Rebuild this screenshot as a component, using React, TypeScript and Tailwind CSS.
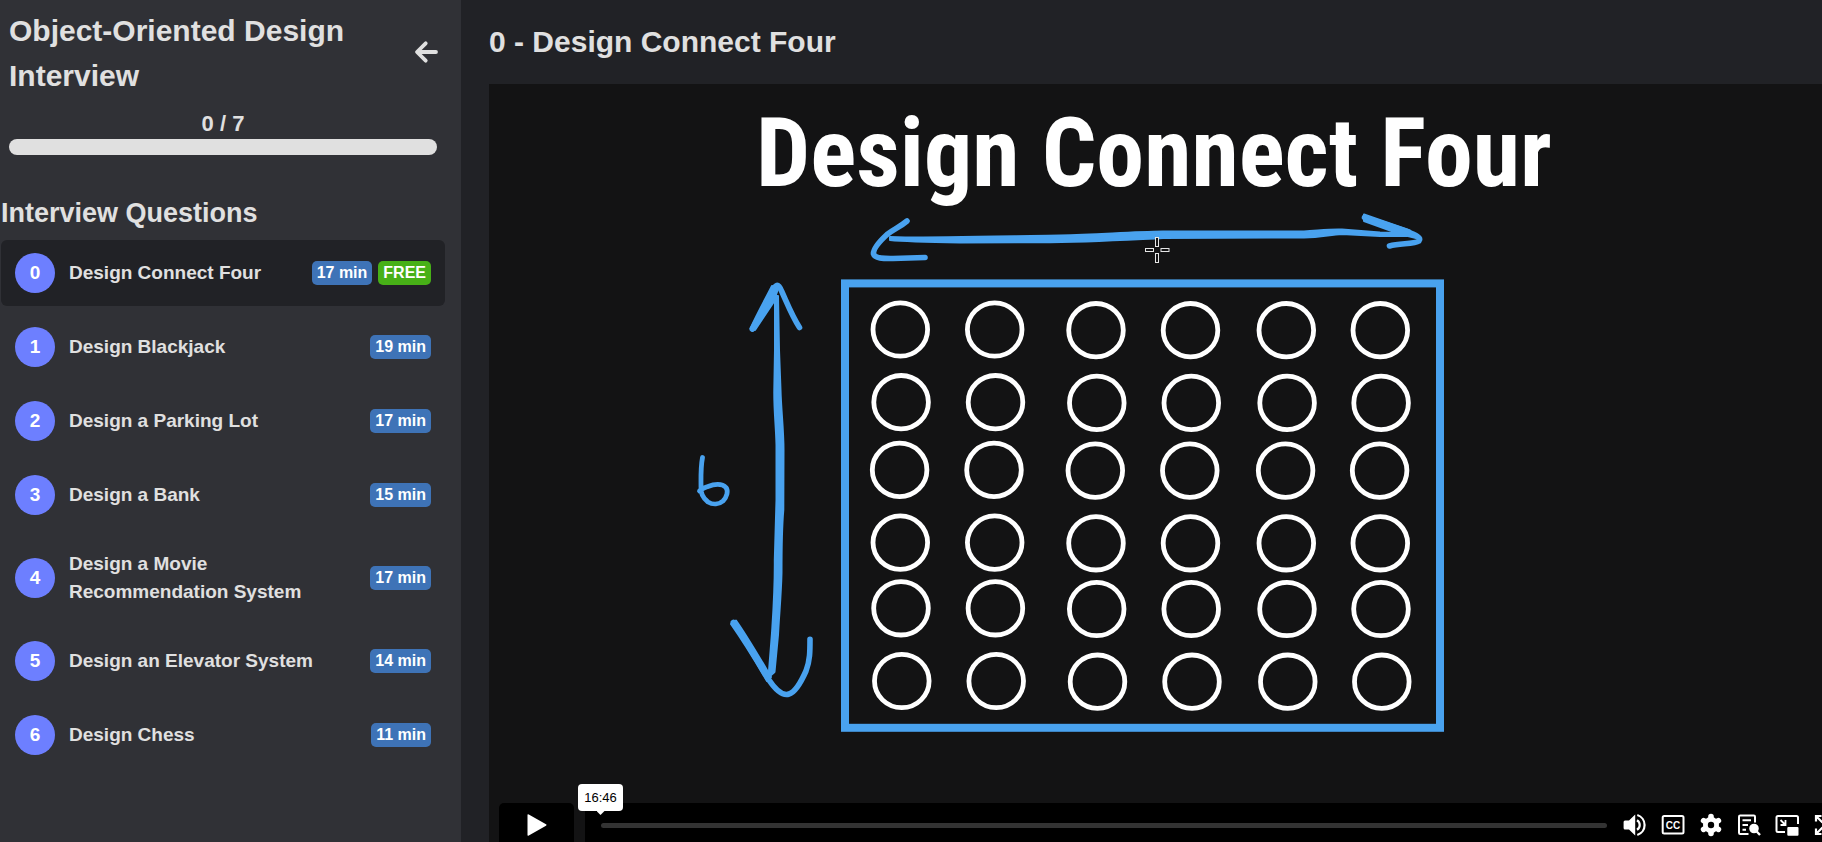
import type { ReactNode } from "react";

type Question = { title: string; minutes: number; free?: boolean };

const questions: Question[] = [
  { title: "Design Connect Four", minutes: 17, free: true },
  { title: "Design Blackjack", minutes: 19 },
  { title: "Design a Parking Lot", minutes: 17 },
  { title: "Design a Bank", minutes: 15 },
  { title: "Design a Movie Recommendation System", minutes: 17 },
  { title: "Design an Elevator System", minutes: 14 },
  { title: "Design Chess", minutes: 11 },
];

function Badge({ free, children }: { free?: boolean; children: ReactNode }) {
  return (
    <span
      className={`shrink-0 rounded-[5px] px-[5px] text-base leading-6 text-white ${
        free ? "bg-[#47b017]" : "bg-[#3e73b7]"
      }`}
    >
      {children}
    </span>
  );
}

function QuestionRow({ index, question, active }: { index: number; question: Question; active: boolean }) {
  return (
    <li>
      <a
        href={`#question-${index}`}
        aria-current={active ? "page" : undefined}
        className={`flex min-h-[66px] items-center rounded-md px-[14px] py-[13px] ${active ? "bg-[#212226]" : ""}`}
      >
        <span className="flex size-10 shrink-0 items-center justify-center rounded-full bg-[#6d7fff] text-[19px] leading-7 text-white">
          {index}
        </span>
        <span className="mr-4 ml-[14px] flex-1 py-px text-[19px] leading-7">{question.title}</span>
        <span className="flex shrink-0 gap-[6px]">
          <Badge>{question.minutes} min</Badge>
          {question.free && <Badge free>FREE</Badge>}
        </span>
      </a>
    </li>
  );
}

function Sidebar() {
  return (
    <aside className="w-[461px] shrink-0 bg-[#303136]">
      <header className="flex items-center justify-between px-[9px] pt-2">
        <h1 className="w-[350px] text-[30px] leading-[45px]">Object-Oriented Design Interview</h1>
        <button type="button" aria-label="Back" className="mr-[14px] mb-0.5 flex">
          <svg viewBox="0 0 24 24" className="size-6" fill="none" stroke="currentColor" strokeWidth="3.8" strokeLinecap="round" strokeLinejoin="round">
            <path d="M22 12H3.500M11.700 3.300L3 12l8.700 8.700" />
          </svg>
        </button>
      </header>
      <div className="mr-6 ml-[9px] pt-[10px]">
        <p id="progress-label" className="text-center text-[22px] leading-[31px]">
          0 / 7
        </p>
        <div
          role="progressbar"
          aria-labelledby="progress-label"
          aria-valuemin={0}
          aria-valuemax={7}
          aria-valuenow={0}
          className="h-4 rounded-full bg-[#e0e0e0]"
        />
      </div>
      <nav className="mt-[38px] mr-4 ml-px">
        <h2 className="mb-[7px] text-[27px] leading-10">Interview Questions</h2>
        <ul className="flex flex-col gap-2">
          {questions.map((question, index) => (
            <QuestionRow key={question.title} index={index} question={question} active={index === 0} />
          ))}
        </ul>
      </nav>
    </aside>
  );
}

const boardColumns = [900.3, 994.7, 1096, 1190.5, 1286.3, 1380.3];
const boardRows = [
  { y: 329.5, dx: 0 },
  { y: 402.2, dx: 0.8 },
  { y: 469.9, dx: -0.7 },
  { y: 542.6, dx: 0 },
  { y: 608.3, dx: 0.7 },
  { y: 681, dx: 1.5 },
];

function BoardSketch() {
  return (
    <svg viewBox="489 84 1375 773" className="block w-full" role="img" aria-label="Connect Four board, six rows high">
      <text x="756" y="186" fill="#fff" className="font-['Roboto_Condensed',Roboto,'Liberation_Sans',sans-serif] text-[96px] font-bold">
        Design Connect Four
      </text>
      <rect x="845" y="283.4" width="595" height="444.4" fill="none" stroke="#49a2ef" strokeWidth="8" />
      {boardRows.map((row) =>
        boardColumns.map((x, column) => (
          <ellipse
            key={`${row.y}-${x}`}
            cx={x + row.dx}
            cy={row.y + (column > 1 ? 0.7 : 0)}
            rx="27.3"
            ry="26.7"
            fill="none"
            stroke="#fff"
            strokeWidth="4.8"
          />
        )),
      )}
      <g fill="none" stroke="#49a2ef" strokeLinecap="round" strokeLinejoin="round" strokeWidth="5.6">
        <path d="M907 221C900 227 894 229 887 234.500C880 241 873 249 873.500 254C875 259 885 258.500 893 258.500L925 257.500" />
        <path d="M1364.500 217.500L1407 231.500C1416 235 1422 238 1419 241C1414 244.500 1400 243 1389.500 246" />
        <path d="M752.300 329L771 296C775 283.500 778 282 782 292C787 303 792 316 799.500 327.500" />
        <path d="M733.300 622.500C748 643 760 666 769 680C777 692 783 696 789 694C796 692 802 680 806 671C810 661 810 651 810 639.300" />
        <path
          strokeWidth="4.800"
          d="M702.500 457.500C700.500 468 701 478 701 487C700.500 494 704 499 708 502C713 505 719 504.500 723 501C727 497 728.500 491 726 487.500C722 483 714 484 708 486.500C704 488 701 489 699.500 491"
        />
      </g>
      <g fill="#49a2ef" stroke="#49a2ef" strokeLinejoin="round" strokeWidth="2">
        <path d="M890 237L905 237.500C950 237.500 1020 236 1060 235.500C1100 234.500 1130 232 1163 231.500L1304 231.500C1320 230.500 1330 229 1342 229.500L1380 232.500L1407 233L1407 236L1380 236L1342 234C1330 234.500 1322 237 1304 237.500L1163 238C1130 239.500 1090 242 1040 242.300L960 242.500C930 242 905 241.500 890 240Z" />
        <path d="M1364 214.500L1410 230.500L1416 238L1400 234L1364 221Z" />
        <path d="M750.500 328.500C758 312 766 298 772 286L778 289L773 303L755 330Z" />
        <path d="M775 296L778 296L779 350L780.500 390C781 410 783.500 430 783.500 450L783.300 510C782 525 781.500 540 781.500 573C781 595 779 615 778 635L774.500 672L770 676L766 674.500L769 671L772 633C773.500 610 775 590 774.800 560L776.500 500L776.500 445C776 425 774 410 774.300 390L775 350Z" />
        <path d="M731 624L736 620.500C747 636 758 655 771 677L767 681C757 664 745 644 731 624Z" />
      </g>
      <g fill="#131314" stroke="#e6e6e6" strokeWidth="1">
        <rect x="1155.500" y="237.500" width="3" height="9" />
        <rect x="1155.500" y="253.500" width="3" height="9" />
        <rect x="1145.500" y="248.500" width="8" height="3" />
        <rect x="1161" y="248.500" width="8" height="3" />
      </g>
    </svg>
  );
}

function VolumeIcon() {
  return (
    <svg viewBox="0 0 24 24" className="size-6" fill="#fff">
      <path d="M2 7.500h4l6.200-6v21L6 16.500H2Q.6 16.500.6 15V9Q.6 7.500 2 7.500Z" />
      <path d="M14 7.200a5.600 5.600 0 0 1 0 9.600M14.300 2a10.500 10.500 0 0 1 0 20" fill="none" stroke="#fff" strokeWidth="2.200" />
    </svg>
  );
}

function CaptionsIcon() {
  return (
    <svg viewBox="0 0 24 24" className="size-6">
      <rect x="1.700" y="3" width="20.800" height="17.500" rx="1.500" fill="none" stroke="#fff" strokeWidth="2" />
      <text x="12.100" y="15.500" textAnchor="middle" fill="#fff" className="font-['Liberation_Sans',sans-serif] text-[10px] font-bold">
        CC
      </text>
    </svg>
  );
}

function GearIcon() {
  return (
    <svg viewBox="0 0 24 24" className="size-6" fill="#fff">
      <g stroke="#fff" strokeWidth="5.600" strokeLinecap="round">
        <path d="M12 3.500v17M4.600 7.700l14.800 8.600M4.600 16.300l14.800-8.600" />
      </g>
      <circle cx="12" cy="12" r="8" />
      <circle cx="12" cy="12" r="3.200" fill="#000" />
    </svg>
  );
}

function TranscriptIcon() {
  return (
    <svg viewBox="0 0 24 24" className="size-6" fill="none" stroke="#fff" strokeWidth="2">
      <path d="M11.500 21H3.200Q2 21 2 19.800V3.700Q2 2.500 3.200 2.500H16.800Q18 2.500 18 3.700V9.500" />
      <path d="M5.500 7.300H14M5.500 12H11M5.500 16.700H9" />
      <circle cx="17" cy="15.500" r="3.800" fill="#fff" />
      <path d="M18.800 17.500L23 22" strokeWidth="2.400" />
    </svg>
  );
}

function PictureInPictureIcon() {
  return (
    <svg viewBox="0 0 24 24" className="size-6" fill="none" stroke="#fff" strokeWidth="2">
      <path d="M10 19H3Q1.500 19 1.500 17.500V4.500Q1.500 3 3 3H21.500Q23 3 23 4.500V11" />
      <path d="M5.500 7L10 11.500M10.500 7V12H5.500" strokeWidth="1.800" />
      <rect x="12.300" y="14" width="11.200" height="8.800" rx="1" fill="#fff" stroke="none" />
    </svg>
  );
}

function FullscreenIcon() {
  return (
    <svg viewBox="0 0 24 24" className="size-6" fill="none" stroke="#fff" strokeWidth="2.200">
      <path d="M8.500 3H3v5.500M3 3l6.500 6.500M15.500 3H21v5.500M21 3l-6.500 6.500M8.500 21H3v-5.500M3 21l6.500-6.500M15.500 21H21v-5.500M21 21l-6.500-6.500" />
    </svg>
  );
}

const playerActions = [
  { label: "Volume", icon: <VolumeIcon /> },
  { label: "Captions", icon: <CaptionsIcon /> },
  { label: "Settings", icon: <GearIcon /> },
  { label: "Transcript", icon: <TranscriptIcon /> },
  { label: "Picture in picture", icon: <PictureInPictureIcon /> },
  { label: "Fullscreen", icon: <FullscreenIcon /> },
];

function PlayerControls() {
  return (
    <div className="absolute inset-x-[10px] bottom-[10px] flex h-11 gap-[11px]">
      <button type="button" aria-label="Play" className="flex w-[75px] shrink-0 items-center justify-center rounded-[5px] bg-black">
        <svg viewBox="0 0 20 22" className="h-[22px] w-5" fill="#fff">
          <path d="M.5 1Q.5-.3 1.800.5L19 10.300Q20 11 19 11.700L1.800 21.500Q.5 22.300.5 21Z" />
        </svg>
      </button>
      <div className="relative flex flex-1 items-center rounded-[5px] bg-black pr-[17px] pl-4">
        <input
          type="range"
          aria-label="Seek"
          min={0}
          max={1006}
          defaultValue={0}
          className="h-[5px] min-w-0 flex-1 appearance-none rounded-full bg-[#333] [&::-webkit-slider-thumb]:size-0 [&::-webkit-slider-thumb]:appearance-none"
        />
        <div className="ml-4 flex gap-[14px]">
          {playerActions.map((action) => (
            <button key={action.label} type="button" aria-label={action.label} className="flex shrink-0">
              {action.icon}
            </button>
          ))}
        </div>
        <div className="absolute bottom-9 -left-[7px] flex h-[27px] w-[45px] items-center justify-center rounded bg-white text-[13px] font-normal text-black">
          16:46
          <span className="absolute top-full left-1/2 h-1 w-2 -translate-x-1/2 bg-white [clip-path:polygon(0_0,100%_0,50%_100%)]" />
        </div>
      </div>
    </div>
  );
}

export default function App() {
  return (
    <div className="flex h-screen overflow-hidden bg-[#212226] font-['Liberation_Sans',Arial,sans-serif] font-bold text-[#e0e0e0]">
      <Sidebar />
      <main className="min-w-0 flex-1 overflow-hidden pl-7">
        <h2 className="pt-[19px] pb-5 text-[30px] leading-[45px]">0 - Design Connect Four</h2>
        <section aria-label="Video player" className="relative w-[calc(100%+42px)] bg-[#131314]">
          <BoardSketch />
          <PlayerControls />
        </section>
      </main>
    </div>
  );
}
